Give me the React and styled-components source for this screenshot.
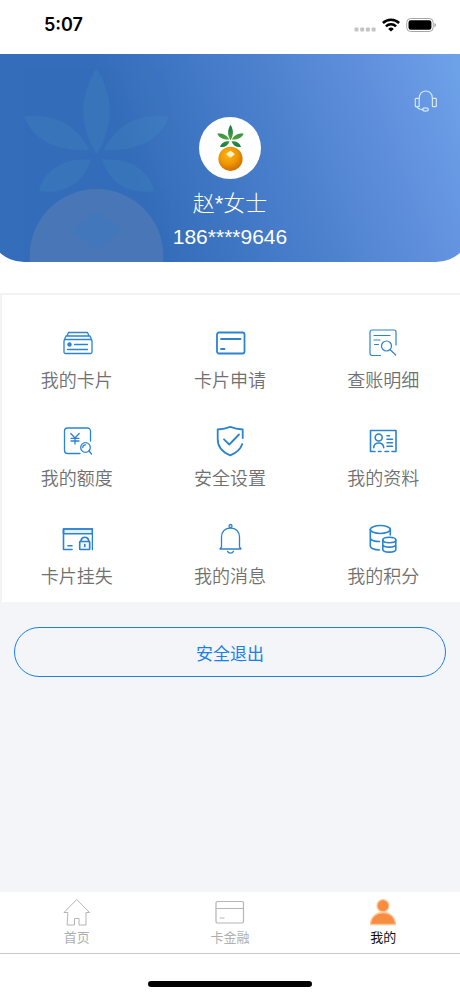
import React from 'react'
import styled, { createGlobalStyle } from 'styled-components'

const GlobalStyle = createGlobalStyle`
  * {
    box-sizing: border-box;
  }

  body {
    margin: 0;
    background: #f3f5f8;
    font-family: "Liberation Sans", "Noto Sans CJK SC", sans-serif;
  }
`

const Page = styled.div`
  display: flex;
  flex-direction: column;
  min-height: 100vh;
`

const StatusBar = styled.div`
  display: flex;
  align-items: center;
  justify-content: space-between;
  height: 54px;
  padding: 0 23px 4px 44px;
  background: #fff;
`

const Time = styled.span`
  font-family: Inter, sans-serif;
  font-size: 18px;
  font-weight: 600;
  line-height: 22px;
  color: #000;
`

const StatusIcons = styled.div`
  display: flex;
  align-items: center;
  gap: 6px;
`

const HeaderWrap = styled.div`
  padding-bottom: 31px;
  overflow: hidden;
  background: #fff;
`

/* a bit wider than the screen, so the rounded corners are cut at the edge */
const Header = styled.header`
  position: relative;
  display: flex;
  flex-direction: column;
  align-items: center;
  margin: 0 -12px;
  padding: 63px 0 10px;
  overflow: hidden;
  border-radius: 0 0 36px 36px;
  background: linear-gradient(70deg, #346db9 32%, #4b80cd 60%, #6392df 83%, #6fa5ea 100%);
`

const Watermark = styled.div`
  position: absolute;
  left: 23px;
  top: 5px;
  opacity: 0.12;
`

const Service = styled.button`
  position: absolute;
  right: 34px;
  top: 35px;
  width: 24px;
  height: 24px;
  padding: 0;
  border: 0;
  background: none;
`

const Avatar = styled.div`
  display: flex;
  align-items: center;
  justify-content: center;
  width: 62px;
  height: 62px;
  border-radius: 50%;
  background: #fff;
`

const UserName = styled.div`
  position: relative;
  margin-top: 8px;
  font-size: 22px;
  font-weight: 300;
  line-height: 34px;
  color: #fff;
`

const Phone = styled.div`
  position: relative;
  font-size: 21px;
  line-height: 31px;
  color: #fff;
`

const Menu = styled.nav`
  display: grid;
  grid-template-columns: repeat(3, 1fr);
  padding: 34px 0 12px;
  background: #fff;
  box-shadow: inset 2px 2px 0 #f3f3f4;
`

const MenuItem = styled.a`
  display: flex;
  flex-direction: column;
  align-items: center;
  height: 98px;
  font-size: 18px;
  font-weight: 350;
  line-height: 26px;
  color: #707070;
  text-decoration: none;

  &:nth-last-child(-n + 3) {
    height: 67px;
  }
`

const MenuLabel = styled.span`
  margin-top: 9px;
`

const Content = styled.main`
  flex: 1;
  padding: 25px 14px;
`

const ExitButton = styled.button`
  display: block;
  width: 100%;
  height: 50px;
  padding: 0;
  border: 1px solid #1c7fe6;
  border-radius: 25px;
  background: none;
  font-family: inherit;
  font-size: 17px;
  color: #1c7fe6;
`

const TabBar = styled.nav`
  display: grid;
  grid-template-columns: repeat(3, 1fr);
  height: 62px;
  padding-top: 4px;
  border-bottom: 1px solid #c9c9cb;
  background: #fff;
`

const Tab = styled.a`
  display: flex;
  flex-direction: column;
  align-items: center;
  font-size: 13px;
  line-height: 19px;
  color: ${(props) => (props.$active ? '#111' : '#b0b0b0')};
  text-decoration: none;
`

const HomeArea = styled.div`
  display: flex;
  justify-content: center;
  height: 42px;
  padding-top: 27px;
  background: #fff;
`

const HomeLine = styled.div`
  width: 164px;
  height: 6px;
  border-radius: 3px;
  background: #000;
`

const Icon = ({ children, width = 1.3, color = '#2c83cf', size = 32 }) => (
  <svg
    width={size}
    height={size}
    viewBox={`0 0 ${size} ${size}`}
    fill="none"
    stroke={color}
    strokeWidth={width}
    strokeLinecap="round"
    strokeLinejoin="round"
    aria-hidden="true"
  >
    {children}
  </svg>
)

const Fruit = ({ width, height, leaf, ball, shine }) => (
  <svg width={width} height={height} viewBox="106 70 92 148" aria-hidden="true">
    <defs>
      <radialGradient id="ball" cx="0.42" cy="0.35" r="0.68">
        <stop offset="0" stopColor="#fcb913" />
        <stop offset="0.55" stopColor="#ef9605" />
        <stop offset="1" stopColor="#c96a06" />
      </radialGradient>
      <linearGradient id="leaf" gradientUnits="userSpaceOnUse" x1="152" y1="75" x2="152" y2="142">
        <stop offset="0" stopColor="#0b7a45" />
        <stop offset="0.6" stopColor="#4c9f3c" />
        <stop offset="1" stopColor="#0b7a45" />
      </linearGradient>
    </defs>
    <g fill={leaf}>
      <path d="M152 75C162 91 161 107 152 121C143 107 142 91 152 75Z" />
      <path d="M191 101C186 114 173 120 156 119C162 106 174 99 191 101Z" />
      <path d="M113 101C118 114 131 120 148 119C142 106 130 99 113 101Z" />
      <path d="M183 141C169 143 159 137 155 124C169 123 180 129 183 141Z" />
      <path d="M121 141C135 143 145 137 149 124C135 123 124 129 121 141Z" />
    </g>
    <circle cx="152" cy="176" r="36" fill={ball} />
    <path d="M152 154L163 162L152 171L141 162Z" fill={shine} stroke={shine} strokeWidth="3" strokeLinejoin="round" />
  </svg>
)

const menus = [
  {
    label: '我的卡片',
    icon: (
      <Icon>
        <rect x="3" y="12.5" width="28" height="14" rx="1.5" />
        <path d="M3.5 12.5L5 9H29L30.5 12.5M6 9L7.5 5.5H26.5L28 9M13.5 17.5H26.5M6.5 22.5H26.5" />
        <circle cx="8.5" cy="17.5" r="1.6" fill="#2c83cf" />
      </Icon>
    ),
  },
  {
    label: '卡片申请',
    icon: (
      <Icon width={1.8}>
        <rect x="3" y="5.5" width="27.5" height="21" rx="2" />
        <path d="M7 12H26.5M7 22H10.5" />
      </Icon>
    ),
  },
  {
    label: '查账明细',
    icon: (
      <Icon width={1.2}>
        <path d="M13.5 28.5H5A2 2 0 0 1 3 26.5V5A2 2 0 0 1 5 3H27A2 2 0 0 1 29 5V18M7 8.5H23M7 13H13M7.5 17.5H11.5" />
        <circle cx="19.5" cy="19" r="5" />
        <path d="M23.2 22.7L28.7 28" />
      </Icon>
    ),
  },
  {
    label: '我的额度',
    icon: (
      <Icon>
        <path d="M19 28.5H6.5A3 3 0 0 1 3.5 25.5V6A3 3 0 0 1 6.5 3H26.5A3 3 0 0 1 29.5 6V16" />
        <path d="M9.8 8.5L14 13L18.2 8.5M14 13V19M10 13.3H18M10 16H18" />
        <circle cx="24.5" cy="22.5" r="4.8" />
        <path d="M28 26L30.5 29M21.8 22.5A2.7 2.7 0 0 1 24.5 19.8" />
      </Icon>
    ),
  },
  {
    label: '安全设置',
    icon: (
      <Icon width={1.8}>
        <path d="M28.7 13V4.5C24 4 20.5 3.3 16.3 1.8C12 3.3 8.5 4 3.7 4.5V14C3.7 22.5 9 27.5 16.3 30.3C22.5 27.8 26.7 24.3 28.2 19" />
        <path d="M10 14.3L15.3 19.5L25 9.5" />
      </Icon>
    ),
  },
  {
    label: '我的资料',
    icon: (
      <Icon width={1.6}>
        <path d="M8 26.5H3.5V5.5H29V26.5H25M11.5 26.5H14M18 26.5H21.5" />
        <circle cx="11.7" cy="12.5" r="3.5" />
        <path d="M6.7 22.7C6.7 16.5 16.7 16.5 16.7 22.7M20 10.7H22.5M20 14.3H25.5M20 17.8H25.5M20 21.3H25.5" />
      </Icon>
    ),
  },
  {
    label: '卡片挂失',
    icon: (
      <Icon width={1.6}>
        <rect x="2.5" y="6" width="29" height="4.7" fill="#dff0fb" />
        <path d="M11 26.5H2.5V6H31.5V26.5M7 22.7H11" />
        <rect x="18.7" y="18.5" width="10" height="8" rx="0.5" fill="#eff8fd" />
        <path d="M20 18.5V17.5A3.9 3.9 0 0 1 27.7 17.5V18.5M23.8 21.5V23.5" />
      </Icon>
    ),
  },
  {
    label: '我的消息',
    icon: (
      <Icon width={1.3}>
        <circle cx="16.5" cy="3" r="1.5" />
        <path d="M6 26H27M7.5 24V14C7.5 8.5 11 5 16.5 5S25.5 8.5 25.5 14V24M7.5 24L6 26M25.5 24L27 26M13.5 28.3C14.5 30.7 18.5 30.7 19.5 28.3" />
      </Icon>
    ),
  },
  {
    label: '我的积分',
    icon: (
      <Icon width={1.6}>
        <ellipse cx="13.3" cy="6.5" rx="10" ry="4" />
        <path d="M3.3 6.5V23C3.3 25.2 7 27 12.5 27M23.3 6.5V12M3.3 15.5C4.5 17.5 8 18.5 12.5 18.5" />
        <ellipse cx="22.3" cy="17" rx="6.5" ry="2.7" />
        <path d="M15.8 17V26.5C15.8 30 28.8 30 28.8 26.5V17M15.8 21.5C15.8 25 28.8 25 28.8 21.5" />
      </Icon>
    ),
  },
]

const App = () => {
  return (
    <>
      <GlobalStyle />
      <Page>
        <StatusBar>
          <Time>5:07</Time>
          <StatusIcons>
            <svg width="22" height="14" viewBox="0 0 22 14" fill="#c4c4c6" aria-hidden="true">
              <rect x="0.5" y="9.5" width="4" height="4" rx="1" />
              <rect x="6.2" y="9.5" width="4" height="4" rx="1" />
              <rect x="11.9" y="9.5" width="4" height="4" rx="1" />
              <rect x="17.6" y="9.5" width="4" height="4" rx="1" />
            </svg>
            <svg width="18" height="14" viewBox="0 0 18 14" fill="none" stroke="#000" strokeWidth="2.5" aria-hidden="true">
              <path d="M0.9 5A11.6 11.6 0 0 1 17.1 5M3.9 8.4A7.4 7.4 0 0 1 14.1 8.4" />
              <path d="M9 13.6L6.2 10.9A4 4 0 0 1 11.8 10.9Z" fill="#000" stroke="none" />
            </svg>
            <svg width="31" height="14" viewBox="0 0 31 14" aria-hidden="true">
              <rect x="0.7" y="0.5" width="26.5" height="13" rx="4" fill="none" stroke="#a5a5a7" />
              <rect x="2.5" y="2.3" width="22.9" height="9.4" rx="2.3" />
              <path d="M28.5 5V9.2C30.3 8.5 30.3 5.7 28.5 5Z" fill="#8e8e90" />
            </svg>
          </StatusIcons>
        </StatusBar>

        <HeaderWrap>
          <Header>
            <Watermark>
              <Fruit width={171} height={275} leaf="#55a8c4" ball="#dcb9a8" shine="#a8c0cc" />
            </Watermark>
            <Service aria-label="客服">
              <Icon size={24} width={1.2} color="#d5e8fb">
                <path d="M5.3 9.5V8.5A6.5 6.5 0 0 1 18.3 8.5V9.5" />
                <rect x="1.3" y="9.3" width="3.9" height="8.4" rx="0.8" />
                <rect x="18.4" y="9.3" width="3.9" height="8.4" rx="0.8" />
                <path d="M3 17.7C3.3 19.3 5.5 20.3 8.7 20.7" />
                <ellipse cx="11.5" cy="20.5" rx="2.8" ry="1.6" />
              </Icon>
            </Service>
            <Avatar>
              <Fruit width={31} height={50} leaf="url(#leaf)" ball="url(#ball)" shine="#fff3cf" />
            </Avatar>
            <UserName>赵*女士</UserName>
            <Phone>186****9646</Phone>
          </Header>
        </HeaderWrap>

        <Menu>
          {menus.map((menu) => (
            <MenuItem href="#" key={menu.label}>
              {menu.icon}
              <MenuLabel>{menu.label}</MenuLabel>
            </MenuItem>
          ))}
        </Menu>

        <Content>
          <ExitButton>安全退出</ExitButton>
        </Content>

        <TabBar>
          <Tab href="#">
            <Icon width={1} color="#b5b5b5">
              <path d="M6.5 16.5H3L15.7 3.5L28.5 16.5H25V29H18V22.5H13.5V29H6.5Z" />
            </Icon>
            首页
          </Tab>
          <Tab href="#">
            <Icon width={1.2} color="#b5b5b5">
              <rect x="2" y="5.5" width="27.5" height="21.5" rx="1.5" />
              <path d="M2 12.5H29.5M6 22H10" />
            </Icon>
            卡金融
          </Tab>
          <Tab href="#" $active>
            <Icon color="#fbc79b">
              <circle cx="16" cy="9.7" r="6" fill="#f98d3f" />
              <path d="M3.5 28.5C4 12.5 28 12.5 28.5 28.5Z" fill="#f98d3f" />
            </Icon>
            我的
          </Tab>
        </TabBar>
        <HomeArea>
          <HomeLine />
        </HomeArea>
      </Page>
    </>
  )
}

export default App
